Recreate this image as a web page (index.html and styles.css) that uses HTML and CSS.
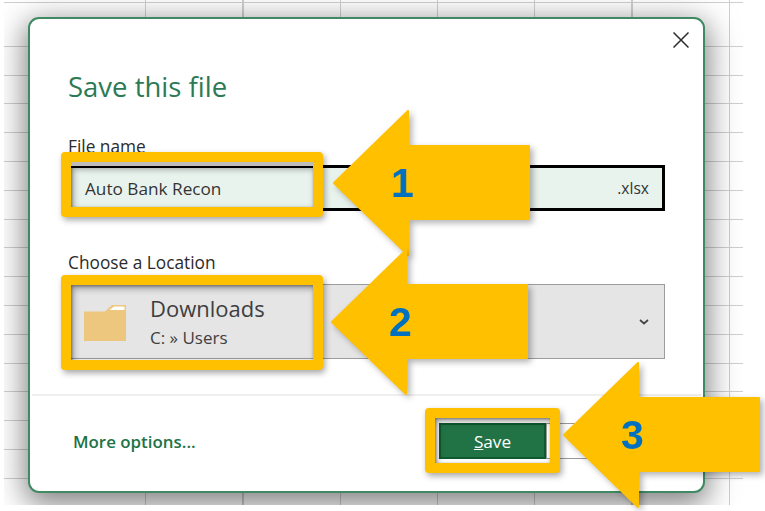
FILE: index.html
```html
<!DOCTYPE html>
<html lang="en">
<head>
<meta charset="utf-8">
<title>Save this file</title>
<link rel="stylesheet" href="styles.css">
</head>
<body>
<div class="sheet">
  <section class="dialog">
    <button class="close" aria-label="Close">
      <svg width="16" height="16" viewBox="0 0 16 16"><path d="M.5.5 15.5 15.5M15.5.5.5 15.5" fill="none" stroke="#2b2b2b" stroke-width="1.5"/></svg>
    </button>
    <h1 class="title">Save this file</h1>
    <label class="label label-file">File name</label>
    <div class="file-input">
      <span>Auto Bank Recon</span>
      <span class="ext">.xlsx</span>
    </div>
    <label class="label label-loc">Choose a Location</label>
    <div class="location">
      <svg class="folder" width="42" height="37" viewBox="0 0 42 37">
        <path d="M0 7.5 H21 L28 1 H42 V37 H0Z" fill="#ecc77d"/>
        <path d="M25.5 6 L30 2.5 H40.5 V6Z" fill="#fff"/>
      </svg>
      <div class="loc-text">
        <div class="loc-name">Downloads</div>
        <div class="loc-path">C: » Users</div>
      </div>
      <svg class="chev" width="10" height="6" viewBox="0 0 10 6"><path d="M1 1 5 4.5 9 1" fill="none" stroke="#444" stroke-width="1.7"/></svg>
    </div>
    <div class="divider"></div>
    <div class="footer">
      <a class="more">More options...</a>
      <div class="buttons">
        <button class="btn-save"><u>S</u>ave</button>
        <button class="btn-cancel"></button>
      </div>
    </div>
  </section>
</div>

<div class="hl hl-1"></div>
<div class="hl hl-2"></div>
<div class="hl hl-3"></div>

<div class="arrow arrow-1">
  <svg width="197" height="146" viewBox="0 0 197 146"><path d="M1 73 75 1V36H196V109H75V145Z" fill="#ffc000" stroke="#ffc000" stroke-width="2" stroke-linejoin="round"/></svg>
  <span class="num">1</span>
</div>
<div class="arrow arrow-2">
  <svg width="197" height="146" viewBox="0 0 197 146"><path d="M1 73 75 1V36H196V109H75V145Z" fill="#ffc000" stroke="#ffc000" stroke-width="2" stroke-linejoin="round"/></svg>
  <span class="num">2</span>
</div>
<div class="arrow arrow-3">
  <svg width="197" height="146" viewBox="0 0 197 146"><path d="M1 73 75 1V36H196V109H75V145Z" fill="#ffc000" stroke="#ffc000" stroke-width="2" stroke-linejoin="round"/></svg>
  <span class="num">3</span>
</div>
</body>
</html>
```

FILE: styles.css
```css
* { box-sizing: border-box; }
html, body { margin: 0; padding: 0; }
body {
  width: 765px;
  height: 511px;
  background: #fff;
  position: relative;
  overflow: hidden;
  font-family: "Open Sans", "Noto Sans", sans-serif;
}
.sheet {
  width: 739px;
  height: 505px;
  margin-left: 4px;
  padding: 17px 0 0 24px;
  overflow: hidden;
  background-color: #fff;
  background-image:
    repeating-linear-gradient(to right, transparent 0, transparent 96px, #cfcfcf 96px, #cfcfcf 97.3px),
    repeating-linear-gradient(to bottom, transparent 0, transparent 27.8px, #cfcfcf 27.8px, #cfcfcf 28.8px);
  background-position: 45px 0, 0 18px;
}
.dialog {
  position: relative;
  width: 677px;
  height: 476px;
  background: #fff;
  border: 2px solid #3f8a63;
  border-radius: 11px;
  box-shadow: 0 8px 30px 3px rgba(0, 0, 0, .5);
  padding: 0 38px;
  display: flex;
  flex-direction: column;
}
.close {
  position: absolute;
  top: 13px;
  right: 14px;
  width: 16px;
  height: 16px;
  padding: 0;
  border: 0;
  background: none;
  display: block;
}
.close svg { display: block; }
.title {
  margin: 50px 0 0;
  font-size: 27.5px;
  line-height: 36px;
  font-weight: 400;
  color: #2b7a55;
}
.label {
  display: block;
  font-size: 17.3px;
  line-height: 22px;
  color: #2b2b2b;
}
.label-file { margin-top: 31px; }
.file-input {
  margin-top: 7px;
  height: 46px;
  border: 3px solid #000;
  background: #e9f3ee;
  display: flex;
  align-items: center;
  justify-content: space-between;
  padding: 0 13px 0 14px;
  font-size: 17.2px;
  color: #333;
}
.ext { font-size: 15.6px; }
.label-loc { margin-top: 41px; }
.location {
  margin-top: 10px;
  height: 75px;
  background: #e5e5e5;
  border: 1px solid #9c9c9c;
  display: flex;
  align-items: center;
  padding: 0 15px;
}
.folder { flex: none; margin-top: 1px; }
.loc-text { margin-left: 24px; flex: 1; color: #3e3e3e; }
.loc-name { font-size: 22px; line-height: 29px; }
.loc-path { font-size: 17px; line-height: 23px; margin-top: 3px; }
.chev { flex: none; }
.divider {
  margin: 35px -36px 0;
  height: 2px;
  background: #efefef;
}
.footer {
  display: flex;
  align-items: center;
  justify-content: space-between;
  padding: 27px 0 0 5px;
}
.more {
  font-size: 16.9px;
  font-weight: 600;
  color: #217346;
}
.buttons { display: flex; }
.btn-save {
  width: 107px;
  height: 36px;
  background: #217346;
  border: 2px solid #0e5a30;
  box-shadow: 0 0 0 3px #fff;
  color: #fff;
  font: 400 17.2px "Open Sans", "Noto Sans", sans-serif;
  padding: 0;
}
.btn-cancel {
  width: 119px;
  height: 36px;
  background: #fff;
  border: 1px solid #999;
}
.hl {
  position: absolute;
  left: 61px;
  width: 262px;
  border: 10px solid #ffc000;
  border-radius: 4px;
  filter: drop-shadow(2px 3px 3px rgba(0, 0, 0, .35));
}
.hl::before {
  content: "";
  position: absolute;
  inset: 0;
  box-shadow: inset 1px 1px 3px rgba(0, 0, 0, .35);
}
.hl-1 { top: 152px; height: 65px; }
.hl-1::after {
  content: "";
  position: absolute;
  left: 0;
  right: 0;
  top: 0;
  height: 4px;
  background: #bdbdbd;
}
.hl-2 { top: 275px; height: 95px; }
.hl-3 { top: 408px; left: 425px; width: 135px; height: 65px; }
.arrow {
  position: absolute;
  width: 197px;
  height: 146px;
  filter: drop-shadow(3px 3px 3px rgba(0, 0, 0, .3));
}
.arrow svg { display: block; overflow: visible; }
.arrow-1 { left: 333px; top: 110px; }
.arrow-2 { left: 331px; top: 249px; }
.arrow-3 { left: 563px; top: 362px; }
.num {
  position: absolute;
  left: 58px;
  top: 50px;
  font: 700 41px/46px "Liberation Sans", Arial, sans-serif;
  color: #0070c0;
}
```
